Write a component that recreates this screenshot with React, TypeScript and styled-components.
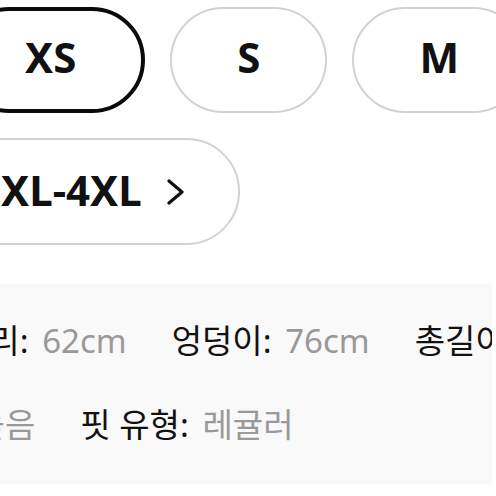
import React from "react";
import styled, { createGlobalStyle } from "styled-components";

const Global = createGlobalStyle`
  html, body { margin: 0; padding: 0; background: #fff; }
  body { font-family: "Noto Sans", "Noto Sans CJK KR", sans-serif; }
`;

const Frame = styled.div`
  width: 496px;
  height: 496px;
  overflow: hidden;
  background: #fff;
`;

const Sizes = styled.div`
  display: flex;
  flex-direction: column;
  gap: 25px;
  padding-top: 7px;
`;

const PillRow = styled.div<{ $shift: number }>`
  display: flex;
  gap: 25px;
  margin-left: ${(p) => p.$shift}px;
`;

const Pill = styled.button<{ $active?: boolean }>`
  flex: 0 0 auto;
  box-sizing: border-box;
  height: 106px;
  border-radius: 53px;
  background: #fff;
  border: ${(p) => (p.$active ? "4px solid #0a0a0a" : "2.5px solid #d2d2d2")};
  display: flex;
  align-items: center;
  justify-content: center;
  padding: 0 65px 7px;
  font-family: "Noto Sans", sans-serif;
  font-weight: 700;
  font-size: 42px;
  line-height: 1;
  color: #111;
`;

const MorePill = styled.button`
  flex: 0 0 auto;
  box-sizing: border-box;
  height: 107px;
  border-radius: 54px;
  background: #fff;
  border: 2.5px solid #d2d2d2;
  display: flex;
  align-items: center;
  gap: 24px;
  padding: 0 52px 0 67px;
  font-family: "Noto Sans", sans-serif;
  font-weight: 700;
  font-size: 42px;
  line-height: 1;
  color: #111;
`;

const MoreLabel = styled.span`
  padding-bottom: 4px;
`;

const Panel = styled.div`
  margin-top: 39px;
  width: 492px;
  height: 200px;
  box-sizing: border-box;
  background: #f9f9f9;
  padding-top: 34px;
  display: flex;
  flex-direction: column;
  gap: 38px;
  overflow: hidden;
`;

const SpecRow = styled.div<{ $shift: number }>`
  display: flex;
  gap: 45px;
  white-space: nowrap;
  margin-left: ${(p) => p.$shift}px;
  font-family: "Noto Sans", "Noto Sans CJK KR", sans-serif;
  font-size: 33px;
  line-height: 46px;
`;

const Spec = styled.span`
  flex: 0 0 auto;
  color: #111;
`;

const Label = styled.span`
  padding-right: 1px;
`;

const Value = styled.span`
  margin-left: 4px;
  color: #999;
`;

const Chevron = () => (
  <svg width="20" height="26" viewBox="0 0 20 26" fill="none">
    <path d="M3 2 L16 13 L3 24" stroke="#111" strokeWidth="3.2" strokeLinecap="round" strokeLinejoin="round" />
  </svg>
);

const row1 = [
  { label: "허리", value: "62cm" },
  { label: "엉덩이", value: "76cm" },
  { label: "총길이", value: "98cm" },
];

const row2 = [
  { label: "신축성", value: "높음" },
  { label: "핏 유형", value: "레귤러" },
];

export default function App() {
  return (
    <Frame>
      <Global />
      <Sizes>
        <PillRow $shift={-44}>
          <Pill $active>XS</Pill>
          <Pill>S</Pill>
          <Pill>M</Pill>
        </PillRow>
        <PillRow $shift={-92}>
          <MorePill>
            <MoreLabel>2XL-4XL</MoreLabel>
            <Chevron />
          </MorePill>
        </PillRow>
      </Sizes>
      <Panel>
        <SpecRow $shift={-41}>
          {row1.map((s) => (
            <Spec key={s.label}>
              <Label>{s.label}:</Label> <Value>{s.value}</Value>
            </Spec>
          ))}
        </SpecRow>
        <SpecRow $shift={-139}>
          {row2.map((s) => (
            <Spec key={s.label}>
              <Label>{s.label}:</Label> <Value>{s.value}</Value>
            </Spec>
          ))}
        </SpecRow>
      </Panel>
    </Frame>
  );
}
